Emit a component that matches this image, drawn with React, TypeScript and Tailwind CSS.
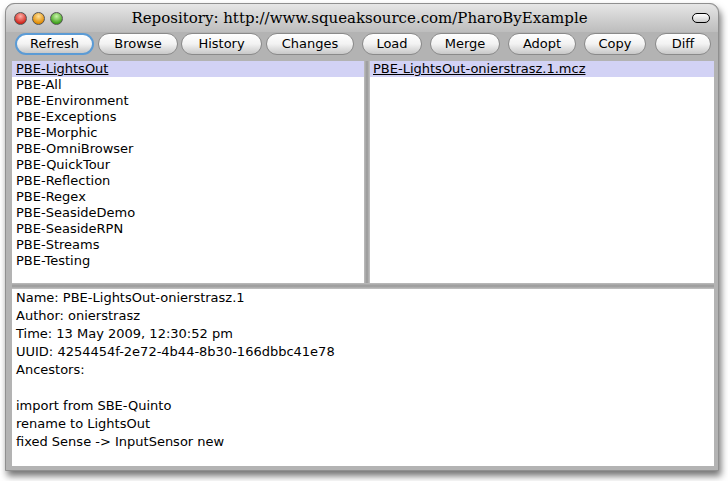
import React from "react"

const packages = [
  "PBE-LightsOut",
  "PBE-All",
  "PBE-Environment",
  "PBE-Exceptions",
  "PBE-Morphic",
  "PBE-OmniBrowser",
  "PBE-QuickTour",
  "PBE-Reflection",
  "PBE-Regex",
  "PBE-SeasideDemo",
  "PBE-SeasideRPN",
  "PBE-Streams",
  "PBE-Testing",
]

const buttons = [
  { label: "Refresh", w: "w-[79px]", ml: "ml-0" },
  { label: "Browse", w: "w-[80px]", ml: "ml-[4px]" },
  { label: "History", w: "w-[81px]", ml: "ml-[3px]" },
  { label: "Changes", w: "w-[88px]", ml: "ml-[4px]" },
  { label: "Load", w: "w-[60px]", ml: "ml-[8px]" },
  { label: "Merge", w: "w-[70px]", ml: "ml-[8px]" },
  { label: "Adopt", w: "w-[68px]", ml: "ml-[8px]" },
  { label: "Copy", w: "w-[62px]", ml: "ml-[8px]" },
  { label: "Diff", w: "w-[56px]", ml: "ml-[9px]" },
]

const info = [
  "Name: PBE-LightsOut-onierstrasz.1",
  "Author: onierstrasz",
  "Time: 13 May 2009, 12:30:52 pm",
  "UUID: 4254454f-2e72-4b44-8b30-166dbbc41e78",
  "Ancestors:",
  "",
  "import from SBE-Quinto",
  "rename to LightsOut",
  "fixed Sense -> InputSensor new",
]

const Light = ({ from, to }: { from: string; to: string }) => (
  <div
    className="w-[13px] h-[13px] rounded-full border border-[#555]"
    style={{ background: `radial-gradient(circle at 50% 30%, ${from} 0%, ${to} 75%)` }}
  />
)

const Btn = ({ label, w, ml, focus }: { label: string; w: string; ml: string; focus?: boolean }) => (
  <div
    className={`${w} ${ml} h-[22px] flex items-center justify-center rounded-full text-[13px] text-black bg-gradient-to-b from-white via-[#f2f2f2] to-[#c8c8c8] ${
      focus ? "border-2 border-[#5b9bd5]" : "border border-[#8a8a8a]"
    }`}
  >
    {label}
  </div>
)

export default function App() {
  return (
    <div className="w-[728px] h-[481px] bg-white font-['DejaVu_Sans',sans-serif]">
      <div className="relative ml-[5px] pt-[3px] w-[714px]">
        <div className="h-[468px] rounded-t-[9px] bg-[#b3b3b3] border border-[#8f8f8f] shadow-[2px_5px_7px_rgba(0,0,0,0.55)] flex flex-col">
          {/* title bar */}
          <div className="h-[28px] flex items-center px-[8px] rounded-t-[9px] bg-gradient-to-b from-[#e6e6e6] to-[#bdbdbd]">
            <div className="flex gap-[5px]">
              <Light from="#ffb0a8" to="#d0231a" />
              <Light from="#ffe19a" to="#e08a00" />
              <Light from="#c8f5a8" to="#3ea01a" />
            </div>
            <div className="flex-1 text-center font-['DejaVu_Serif',serif] text-[15px] text-black pr-[36px]">
              Repository: http://www.squeaksource.com/PharoByExample
            </div>
            <div className="w-[18px] h-[10px] rounded-full border border-black bg-gradient-to-b from-white to-[#ccc]" />
          </div>
          {/* buttons */}
          <div className="flex items-start pl-[9px] pt-[1px] h-[28px]">
            {buttons.map((b, i) => (
              <Btn key={b.label} label={b.label} w={b.w} ml={b.ml} focus={i === 0} />
            ))}
          </div>
          {/* panes */}
          <div className="flex flex-col flex-1 pl-[6px] pr-[4px] pt-[1px] pb-[4px]">
            <div className="flex h-[222px]">
              <div className="w-[352px] bg-white text-[13px] leading-[16px] text-black">
                {packages.map((p, i) => (
                  <div key={p} className={`pl-[4px] h-[16px] ${i === 0 ? "bg-[#d2d2f5] underline" : ""}`}>
                    {p}
                  </div>
                ))}
              </div>
              <div className="w-[6px] bg-gradient-to-r from-[#bdbdbd] via-[#999] to-[#c4c4c4]" />
              <div className="flex-1 bg-white text-[13px] leading-[16px] text-black">
                <div className="pl-[3px] h-[16px] bg-[#d2d2f5] underline">PBE-LightsOut-onierstrasz.1.mcz</div>
              </div>
            </div>
            <div className="h-[6px] bg-gradient-to-b from-[#bdbdbd] via-[#999] to-[#c4c4c4]" />
            <div className="flex-1 bg-white text-[13px] leading-[18px] text-black pl-[4px]">
              {info.map((l, i) => (
                <div key={i} className="h-[18px]">
                  {l}
                </div>
              ))}
            </div>
          </div>
        </div>
      </div>
    </div>
  )
}
